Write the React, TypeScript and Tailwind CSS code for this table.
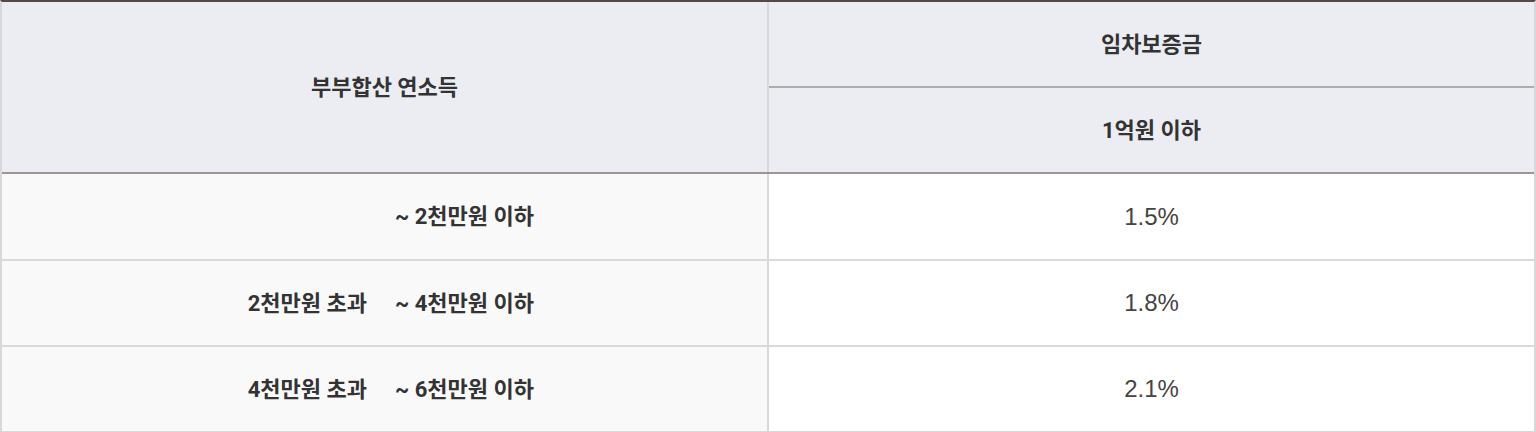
const ROWS = [
  { from: '', to: '~ 2천만원 이하', rate: '1.5%' },
  { from: '2천만원 초과', to: '~ 4천만원 이하', rate: '1.8%' },
  { from: '4천만원 초과', to: '~ 6천만원 이하', rate: '2.1%' },
];

const KO = "font-['Roboto','Noto_Sans_CJK_KR',sans-serif]";

export default function App() {
  return (
    <div className="w-[1536px] h-[432px] overflow-hidden bg-white">
      <div className="border-t-2 border-t-[#524a47] border-x-2 border-x-[#d8d8d8]">
        {/* Header */}
        <div className="flex bg-[#ecedf2] border-b-2 border-b-[#9e9696]">
          <div
            className={`w-[767px] border-r-2 border-r-[#d8d8d8] flex items-center justify-center text-[22px] font-bold text-[#333] ${KO}`}
          >
            부부합산 연소득
          </div>
          <div className="flex-1 flex flex-col">
            <div
              className={`h-[86px] border-b-2 border-b-[#adadad] flex items-center justify-center text-[22px] font-bold text-[#333] ${KO}`}
            >
              임차보증금
            </div>
            <div
              className={`h-[84px] flex items-center justify-center text-[22px] font-bold text-[#333] ${KO}`}
            >
              1억원 이하
            </div>
          </div>
        </div>

        {/* Body */}
        {ROWS.map((row, i) => (
          <div
            key={i}
            className={`flex border-b-2 border-b-[#d9d9d9] ${i === 0 ? 'h-[87px]' : 'h-[86px]'}`}
          >
            <div
              className={`w-[767px] bg-[#f9f9f9] border-r-2 border-r-[#d8d8d8] flex items-center justify-center gap-[28px] text-[22px] font-bold text-[#333] ${KO}`}
            >
              <span className="w-[136px] text-right whitespace-nowrap">{row.from}</span>
              <span className="w-[143px] text-left whitespace-nowrap">{row.to}</span>
            </div>
            <div className="flex-1 flex items-center justify-center text-[24px] text-[#444] font-['Liberation_Sans',Arial,sans-serif]">
              {row.rate}
            </div>
          </div>
        ))}
      </div>
    </div>
  );
}
